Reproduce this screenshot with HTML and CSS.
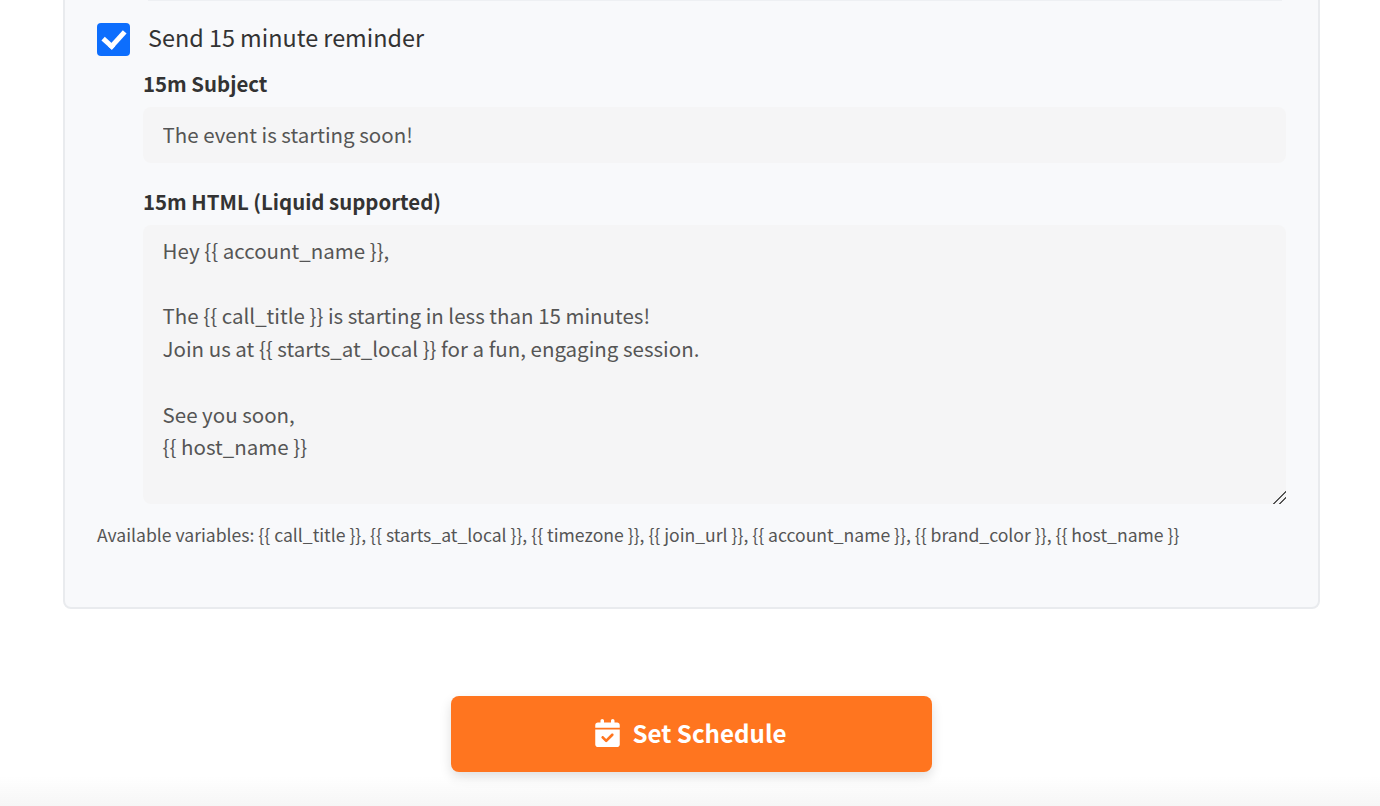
FILE: index.html
```html
<!DOCTYPE html>
<html lang="en">
<head>
  <meta charset="UTF-8">
  <meta name="viewport" content="width=device-width, initial-scale=1.0">
  <title>Set Schedule</title>
  <link rel="stylesheet" href="styles.css">
</head>
<body>
  <div class="page">
    <div class="card">
      <div class="divider"></div>

      <label class="check-row">
        <input type="checkbox" class="check" checked>
        <span>Send 15 minute reminder</span>
      </label>

      <div class="fields">
        <label class="field-label" for="subject15">15m Subject</label>
        <input id="subject15" class="text-input" type="text" value="The event is starting soon!">

        <label class="field-label field-label-html" for="html15">15m HTML (Liquid supported)</label>
        <textarea id="html15" class="text-area" spellcheck="false">Hey {{ account_name }},

The {{ call_title }} is starting in less than 15 minutes!
Join us at {{ starts_at_local }} for a fun, engaging session.

See you soon,
{{ host_name }}</textarea>
      </div>

      <p class="hint">Available variables: {{ call_title }}, {{ starts_at_local }}, {{ timezone }}, {{ join_url }}, {{ account_name }}, {{ brand_color }}, {{ host_name }}</p>
    </div>

    <div class="actions">
      <button class="btn-schedule" type="button">
        <svg class="btn-icon" viewBox="0 0 448 512" aria-hidden="true">
          <path fill="currentColor" d="M128 0c17.7 0 32 14.3 32 32V64H288V32c0-17.7 14.3-32 32-32s32 14.3 32 32V64h48c26.5 0 48 21.5 48 48v48H0V112C0 85.500 21.500 64 48 64H96V32c0-17.700 14.300-32 32-32zM0 192H448V464c0 26.500-21.500 48-48 48H48c-26.500 0-48-21.500-48-48V192zM329 305c9.400-9.400 9.400-24.600 0-33.900s-24.600-9.400-33.900 0l-95 95-47-47c-9.400-9.400-24.600-9.400-33.900 0s-9.400 24.600 0 33.900l64 64c9.400 9.400 24.600 9.400 33.900 0L329 305z"/>
        </svg>
        <span class="btn-text">Set Schedule</span>
      </button>
    </div>
  </div>
  <div class="bottom-fade"></div>
</body>
</html>
```

FILE: styles.css
```css
html, body {
  margin: 0;
  height: 100%;
  overflow: hidden;
}

body {
  font-family: "Noto Sans CJK JP", "Noto Sans", sans-serif;
  background-color: #fff;
  color: #333;
}

.page {
  padding: 0 60px 0 63px;
}

.card {
  box-sizing: border-box;
  height: 621px;
  margin-top: -12px;
  padding: 10px 32px 0;
  background-color: #f8f9fb;
  border: 2px solid #e9ebee;
  border-radius: 8px;
}

.divider {
  height: 1px;
  margin-left: 51px;
  margin-right: 4px;
  background-color: #eef0f3;
}

.check-row {
  display: flex;
  align-items: center;
  gap: 18px;
  height: 33px;
  margin-top: 22px;
  font-size: 23.4px;
  line-height: 33px;
  color: #333;
}

.check-row span {
  padding-bottom: 4px;
}

.check {
  appearance: none;
  position: relative;
  width: 33px;
  height: 33px;
  margin: 0;
  background-color: #0d6efd;
  border-radius: 4px;
}

.check::after {
  content: "";
  position: absolute;
  left: 10px;
  top: 3px;
  width: 9px;
  height: 17px;
  border: solid #fff;
  border-width: 0 5.5px 5.5px 0;
  transform: rotate(42deg);
}

.fields {
  margin-left: 46px;
}

.field-label {
  display: block;
  margin-top: 11px;
  font-size: 20.4px;
  line-height: 32px;
  font-weight: 700;
}

.field-label-html {
  margin-top: 22px;
}

.text-input,
.text-area {
  display: block;
  box-sizing: border-box;
  width: 1143px;
  padding: 0 19.6px;
  border: 0;
  border-radius: 8px;
  background-color: #f5f5f6;
  color: #555;
  font-family: inherit;
  font-size: 20.5px;
  outline: none;
}

.text-input {
  height: 56px;
  margin-top: 8px;
  padding-bottom: 2px;
}

.text-area {
  height: 279px;
  margin-top: 8px;
  padding-top: 9px;
  padding-bottom: 10px;
  line-height: 32.7px;
  resize: vertical;
}

.text-area::-webkit-resizer {
  background:
    linear-gradient(135deg, transparent 56%, #555 56%, #555 63%, transparent 63%, transparent 76%, #555 76%, #555 83%, transparent 83%);
}

.hint {
  margin: 18px 0 0;
  font-size: 17.58px;
  line-height: 26px;
  color: #555;
}

.actions {
  display: flex;
  justify-content: center;
  margin-top: 87px;
}

.btn-schedule {
  display: flex;
  align-items: center;
  justify-content: center;
  gap: 13px;
  width: 481px;
  height: 76px;
  border: 0;
  border-radius: 8px;
  background-color: #ff751f;
  color: #fff;
  font-family: inherit;
  font-size: 24.1px;
  font-weight: 700;
  box-shadow: 0 5px 12px rgba(0,0,0,0.13);
  cursor: pointer;
}

.btn-text {
  padding-bottom: 3px;
}

.btn-icon {
  width: 25px;
  height: 28px;
  margin-left: -2px;
  margin-bottom: 2px;
}

.bottom-fade {
  position: fixed;
  left: 0;
  right: 0;
  bottom: 0;
  height: 30px;
  background: linear-gradient(to bottom, rgba(245,245,245,0), #f6f6f6);
  pointer-events: none;
}
```
